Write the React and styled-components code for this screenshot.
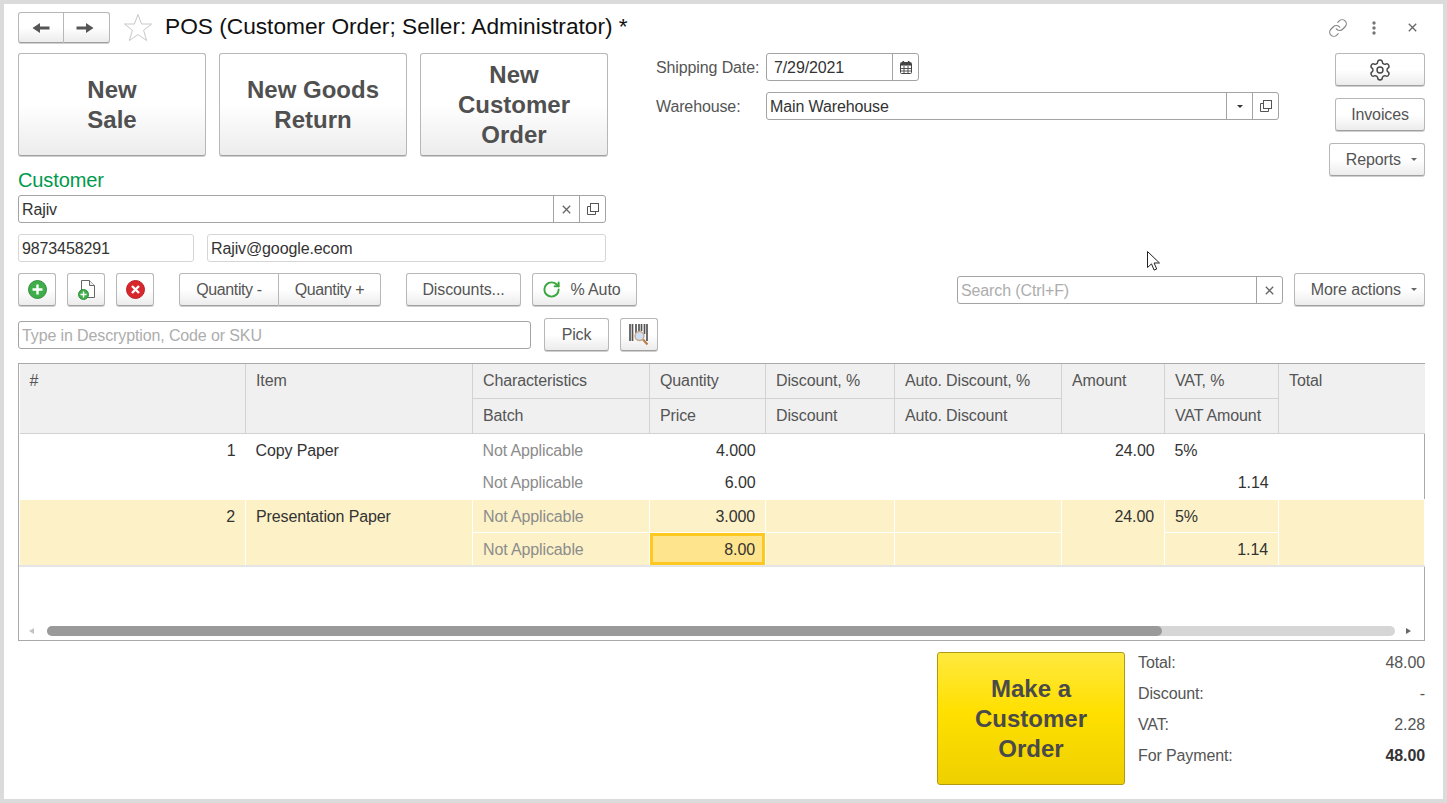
import React from 'react';
import styled, {createGlobalStyle, css} from 'styled-components';
import {Link, Settings, RotateCw} from 'lucide-react';

const GlobalStyle = createGlobalStyle`
  html, body {
    margin: 0;
    background: #dbdbdb;
  }
  body {
    font-family: "Liberation Sans", Arial, sans-serif;
    font-size: 16px;
    letter-spacing: -0.12px;
    color: #4b4b4b;
  }
  * { box-sizing: border-box; }
`;

const Panel = styled.div`
  position: relative;
  width: 1439px;
  height: 795px;
  margin: 4px;
  padding: 8px 18px 0 14px;
  background: #fff;
`;

const Header = styled.div`
  display: flex;
  align-items: center;
  height: 31px;
  margin-bottom: 10px;
`;

const NavGroup = styled.div`
  display: flex;
  width: 92px;
  height: 31px;
`;

const buttonLook = css`
  background: linear-gradient(#fff 50%, #ececec);
  border: 1px solid #b7b7b7;
  border-bottom-color: #a0a0a0;
  border-radius: 3px;
  box-shadow: 0 1px 0 #cfcfcf;
`;

const NavButton = styled.div`
  ${buttonLook}
  flex: 0 0 46px;
  display: flex;
  align-items: center;
  justify-content: center;
  padding-right: ${p => (p.$right ? 3 : 0)}px;
  border-radius: ${p => (p.$right ? '0 3px 3px 0' : '3px 0 0 3px')};
  border-left-width: ${p => (p.$right ? 0 : 1)}px;
`;

const StarWrap = styled.div`
  display: flex;
  margin-left: 13px;
`;

const Title = styled.h1`
  margin: 0 0 2px 12px;
  font-size: 22.7px;
  font-weight: normal;
  letter-spacing: 0;
  color: #111;
  white-space: nowrap;
`;

const HeaderTools = styled.div`
  display: flex;
  align-items: center;
  margin-left: auto;
  padding-right: 8px;
  color: #858585;
`;

const KebabSlot = styled.div`
  display: flex;
  margin: 0 32px 0 24px;
`;

const TopArea = styled.div`
  display: flex;
`;

const LeftColumn = styled.div`
  width: 590px;
  flex: none;
`;

const BigRow = styled.div`
  display: flex;
  gap: 13px;
`;

const BigButton = styled.div`
  ${buttonLook}
  display: flex;
  align-items: center;
  justify-content: center;
  width: 188px;
  height: 103px;
  font-size: 24px;
  font-weight: bold;
  line-height: 30px;
  letter-spacing: 0;
  text-align: center;
  color: #505050;
`;

const GreenLabel = styled.div`
  margin-top: 14px;
  height: 25px;
  font-size: 20px;
  line-height: 21px;
  color: #00994d;
`;

const Field = styled.div`
  display: flex;
  align-items: stretch;
  width: ${p => p.$w}px;
  height: 28px;
  background: #fff;
  border: 1px solid ${p => (p.$soft ? '#d6d6d6' : '#a3a3a3')};
  border-radius: 3px;
`;

const FieldText = styled.div`
  flex: 1;
  padding-left: ${p => p.$pad || 3}px;
  line-height: 28px;
  white-space: nowrap;
  color: ${p => (p.$hint ? '#adadad' : '#333')};
`;

const FieldButton = styled.div`
  display: flex;
  align-items: center;
  justify-content: center;
  flex: none;
  width: ${p => p.$w || 26}px;
  border-left: 1px solid #a3a3a3;
`;

const ContactRow = styled.div`
  display: flex;
  gap: 13px;
  margin-top: 11px;
`;

const MiddleColumn = styled.div`
  width: 623px;
  margin-left: 48px;
  flex: none;
`;

const FormRow = styled.div`
  display: flex;
  align-items: center;
  margin-bottom: 11px;
`;

const FormLabel = styled.div`
  width: 110px;
  padding-top: 2px;
  color: #555;
  white-space: nowrap;
`;

const RightColumn = styled.div`
  display: flex;
  flex-direction: column;
  align-items: flex-end;
  gap: 12px;
  margin-left: auto;
`;

const Button = styled.div`
  ${buttonLook}
  display: flex;
  align-items: center;
  justify-content: ${p => (p.$menu ? 'flex-end' : 'center')};
  gap: ${p => p.$gap || 0}px;
  flex: none;
  width: ${p => p.$w}px;
  height: 33px;
  padding-right: ${p => p.$endPad || 0}px;
  color: #555;
  white-space: nowrap;
`;

const GroupButton = styled(Button)`
  letter-spacing: -0.4px;
  border-radius: ${p => (p.$right ? '0 3px 3px 0' : '3px 0 0 3px')};
  border-left-width: ${p => (p.$right ? 0 : 1)}px;
`;

const Caret = styled.span`
  display: inline-block;
  width: 0;
  height: 0;
  margin-left: ${p => p.$gap ?? 10}px;
  border: 3px solid transparent;
  border-top: 3px solid ${p => p.$color || '#666'};
  border-bottom: 0;
`;

const Toolbar = styled.div`
  display: flex;
  align-items: center;
  margin-top: 11px;
  height: 33px;
`;

const ToolGroup = styled.div`
  display: flex;
  margin-left: ${p => p.$left || 0}px;
`;

const SearchBox = styled.div`
  display: flex;
  margin-left: auto;
  margin-right: 11px;
  padding-top: 1px;
`;

const QuickRow = styled.div`
  display: flex;
  align-items: center;
  gap: 13px;
  margin: 12px 0 12px;
  height: 33px;
`;

const QuickTail = styled.div`
  margin-left: -2px;
`;

const TableFrame = styled.div`
  display: flex;
  flex-direction: column;
  width: 1407px;
  height: 278px;
  border: 1px solid #a9a9a9;
`;

const Grid = styled.table`
  width: 1405px;
  table-layout: fixed;
  border-collapse: collapse;
`;

const Head = styled.th`
  height: ${p => (p.$low ? 35 : 34)}px;
  padding: 0 0 0 10px;
  font-weight: normal;
  text-align: left;
  vertical-align: top;
  line-height: 33px;
  color: #555;
  background: #f0f0f0;
  border: 1px solid #d2d2d2;
  border-top: 0;
  &:first-child { border-left: 0; }
  &:last-child { border-right: 0; }
`;

const Cell = styled.td`
  height: 33px;
  padding: 2px 10px 0;
  text-align: ${p => (p.$num ? 'right' : 'left')};
  vertical-align: top;
  line-height: 30px;
  color: ${p => (p.$muted ? '#8c8c8c' : '#333')};
  ${p => p.$picked && css`
    height: 32px;
    background: #fdf2c7;
    border: 1px solid #fff;
  `}
  ${p => p.$active && css`
    background: #fee48c;
    box-shadow: inset 0 0 0 3px #fdc921;
  `}
`;

const PickedRow = styled.tr`
  border-top: ${p => (p.$first ? '1px solid #e5e5e5' : '0')};
  border-bottom: ${p => (p.$last ? '2px solid #e5e5e5' : '0')};
`;

const ScrollBar = styled.div`
  display: flex;
  align-items: center;
  margin-top: auto;
  height: 10px;
  margin-bottom: 4px;
  padding: 0 13px 0 10px;
`;

const ScrollArrow = styled.span`
  width: 0;
  height: 0;
  border: 3px solid transparent;
  ${p => (p.$right
    ? css`border-left: 5px solid #666; border-right: 0; margin-left: 11px;`
    : css`border-right: 5px solid #c4c4c4; border-left: 0; margin-right: 13px;`)}
`;

const ScrollTrack = styled.div`
  flex: 1;
  height: 10px;
  background: #d6d6d6;
  border-radius: 5px;
`;

const ScrollThumb = styled.div`
  width: 1115px;
  height: 10px;
  background: #9a9a9a;
  border-radius: 5px;
`;

const Footer = styled.div`
  display: flex;
  justify-content: flex-end;
  margin-top: 11px;
`;

const MakeOrder = styled.div`
  display: flex;
  align-items: center;
  justify-content: center;
  width: 188px;
  height: 133px;
  font-size: 24px;
  font-weight: bold;
  line-height: 30px;
  letter-spacing: 0;
  text-align: center;
  color: #4a4a4a;
  background: linear-gradient(#ffe93f, #ffe000 45%, #eed000);
  border: 1px solid #b09a10;
  border-radius: 3px;
`;

const Totals = styled.div`
  width: 287px;
  margin: -5px 0 0 13px;
`;

const TotalRow = styled.div`
  display: flex;
  justify-content: space-between;
  height: 31px;
  line-height: 31px;
  color: #555;
`;

const TotalValue = styled.span`
  font-weight: ${p => (p.$bold ? 'bold' : 'normal')};
  color: ${p => (p.$bold ? '#333' : '#555')};
`;

const Pointer = styled.svg`
  position: absolute;
  left: 1143px;
  top: 247px;
`;

const Arrow = ({flip}) => (
  <svg width="18" height="12" viewBox="0 0 18 12" style={flip ? {transform: 'scaleX(-1)'} : undefined}>
    <path d="M0.5 6 8 1V4.4h9.5v3.2H8V11z" fill="#555" />
  </svg>
);

const Star = () => (
  <svg width="30" height="29" viewBox="0 0 30 29">
    <path d="M15 1.5 18.6 11H28.6L20.6 17.3 23.6 27.5 15 21.6 6.4 27.5 9.4 17.3 1.4 11H11.4z" fill="#fff" stroke="#c8c8c8" />
  </svg>
);

const Kebab = () => (
  <svg width="4" height="14" viewBox="0 0 4 14">
    <circle cx="2" cy="2" r="1.7" fill="#777" />
    <circle cx="2" cy="7" r="1.7" fill="#777" />
    <circle cx="2" cy="12" r="1.7" fill="#777" />
  </svg>
);

const Cross = ({size = 9, color = '#666'}) => (
  <svg width={size} height={size} viewBox="0 0 9 9">
    <path d="M.8.8l7.4 7.4M8.2.8.8 8.2" stroke={color} strokeWidth="1.3" fill="none" />
  </svg>
);

const OpenIcon = () => (
  <svg width="12" height="12" viewBox="0 0 12 12" fill="none" stroke="#555">
    <path d="M3.5 3.5h-3v8h8v-3" />
    <rect x="3.5" y=".5" width="8" height="8" />
  </svg>
);

const Calendar = () => (
  <svg width="12" height="13" viewBox="0 0 12 13">
    <path d="M2.5 0h1.6v2H2.5zM7.9 0h1.6v2H7.9z" fill="#444" />
    <rect x=".5" y="1.5" width="11" height="11" rx="1" fill="#fff" stroke="#444" />
    <rect x="1" y="2" width="10" height="2.6" fill="#444" />
    <path d="M4 5v7M8 5v7M1 7.5h10M1 10h10" stroke="#444" strokeWidth=".9" />
  </svg>
);

const AddIcon = () => (
  <svg width="19" height="19" viewBox="0 0 19 19">
    <circle cx="9.5" cy="9.5" r="9" fill="#3fae4a" stroke="#2f8f3a" />
    <path d="M9.5 4.5v10M4.5 9.5h10" stroke="#fff" strokeWidth="2.4" />
  </svg>
);

const AddDocIcon = () => (
  <svg width="17" height="20" viewBox="0 0 17 20">
    <path d="M3.5.5h8l5 5v12h-13z" fill="#fff" stroke="#666" />
    <path d="M11.5.5v5h5" fill="#eee" stroke="#666" />
    <circle cx="5.5" cy="14.5" r="5" fill="#3fae4a" stroke="#2f8f3a" />
    <path d="M5.5 11.5v6M2.5 14.5h6" stroke="#fff" strokeWidth="1.4" />
  </svg>
);

const RemoveIcon = () => (
  <svg width="19" height="19" viewBox="0 0 19 19">
    <circle cx="9.5" cy="9.5" r="9" fill="#d8262c" stroke="#b91f24" />
    <path d="M6 6l7 7M13 6l-7 7" stroke="#fff" strokeWidth="2.4" />
  </svg>
);

const BarcodeIcon = () => (
  <svg width="20" height="22" viewBox="0 0 20 22">
    <path d="M1 0v17M3.5 0v17M7 0v10M10 0v7M12.5 0v7M15.5 0v10M18 0v17" stroke="#555" strokeWidth="1.7" />
    <circle cx="10.5" cy="12" r="4.5" fill="#cfe0f5" stroke="#c9a98a" strokeWidth="1.4" />
    <path d="M14 15.5l4.5 5" stroke="#b9804f" strokeWidth="2.2" />
  </svg>
);

const columns = [226, 227, 177, 116, 129, 167, 103, 114, 146];

const App = () => (
  <>
    <GlobalStyle />
    <Panel>
      <Header>
        <NavGroup>
          <NavButton><Arrow /></NavButton>
          <NavButton $right><Arrow flip /></NavButton>
        </NavGroup>
        <StarWrap><Star /></StarWrap>
        <Title>POS (Customer Order; Seller: Administrator) *</Title>
        <HeaderTools>
          <Link size={20} strokeWidth={1.4} />
          <KebabSlot><Kebab /></KebabSlot>
          <Cross />
        </HeaderTools>
      </Header>

      <TopArea>
        <LeftColumn>
          <BigRow>
            <BigButton>New<br />Sale</BigButton>
            <BigButton>New Goods<br />Return</BigButton>
            <BigButton>New<br />Customer<br />Order</BigButton>
          </BigRow>
          <GreenLabel>Customer</GreenLabel>
          <Field $w={588}>
            <FieldText>Rajiv</FieldText>
            <FieldButton><Cross /></FieldButton>
            <FieldButton><OpenIcon /></FieldButton>
          </Field>
          <ContactRow>
            <Field $w={176} $soft><FieldText>9873458291</FieldText></Field>
            <Field $w={399} $soft><FieldText>Rajiv@google.ecom</FieldText></Field>
          </ContactRow>
        </LeftColumn>

        <MiddleColumn>
          <FormRow>
            <FormLabel>Shipping Date:</FormLabel>
            <Field $w={153}>
              <FieldText $pad={7}>7/29/2021</FieldText>
              <FieldButton><Calendar /></FieldButton>
            </Field>
          </FormRow>
          <FormRow>
            <FormLabel>Warehouse:</FormLabel>
            <Field $w={513}>
              <FieldText>Main Warehouse</FieldText>
              <FieldButton><Caret $gap={0} $color="#333" /></FieldButton>
              <FieldButton><OpenIcon /></FieldButton>
            </Field>
          </FormRow>
        </MiddleColumn>

        <RightColumn>
          <Button $w={90}><Settings size={24} strokeWidth={1.4} color="#444" /></Button>
          <Button $w={90}>Invoices</Button>
          <Button $w={96} $menu $endPad={7}>Reports<Caret /></Button>
        </RightColumn>
      </TopArea>

      <Toolbar>
        <Button $w={38}><AddIcon /></Button>
        <ToolGroup $left={11}><Button $w={38}><AddDocIcon /></Button></ToolGroup>
        <ToolGroup $left={11}><Button $w={38}><RemoveIcon /></Button></ToolGroup>
        <ToolGroup $left={25}>
          <GroupButton $w={100}>Quantity -</GroupButton>
          <GroupButton $w={102} $right>Quantity +</GroupButton>
        </ToolGroup>
        <ToolGroup $left={25}><Button $w={115}>Discounts...</Button></ToolGroup>
        <ToolGroup $left={11}>
          <Button $w={105} $gap={10} $endPad={7}>
            <RotateCw size={19} strokeWidth={2.5} color="#3aa83f" />
            % Auto
          </Button>
        </ToolGroup>
        <SearchBox>
          <Field $w={326}>
            <FieldText $hint>Search (Ctrl+F)</FieldText>
            <FieldButton><Cross /></FieldButton>
          </Field>
        </SearchBox>
        <Button $w={131} $menu $endPad={7}>More actions<Caret /></Button>
      </Toolbar>

      <QuickRow>
        <Field $w={513}><FieldText $hint>Type in Descryption, Code or SKU</FieldText></Field>
        <Button $w={65}>Pick</Button>
        <QuickTail><Button $w={38}><BarcodeIcon /></Button></QuickTail>
      </QuickRow>

      <TableFrame>
        <Grid>
          <colgroup>
            {columns.map((w, i) => <col key={i} style={{width: w}} />)}
          </colgroup>
          <thead>
            <tr>
              <Head rowSpan={2}>#</Head>
              <Head rowSpan={2}>Item</Head>
              <Head>Characteristics</Head>
              <Head>Quantity</Head>
              <Head>Discount, %</Head>
              <Head>Auto. Discount, %</Head>
              <Head rowSpan={2}>Amount</Head>
              <Head>VAT, %</Head>
              <Head rowSpan={2}>Total</Head>
            </tr>
            <tr>
              <Head $low>Batch</Head>
              <Head $low>Price</Head>
              <Head $low>Discount</Head>
              <Head $low>Auto. Discount</Head>
              <Head $low>VAT Amount</Head>
            </tr>
          </thead>
          <tbody>
            <tr>
              <Cell rowSpan={2} $num>1</Cell>
              <Cell rowSpan={2}>Copy Paper</Cell>
              <Cell $muted>Not Applicable</Cell>
              <Cell $num>4.000</Cell>
              <Cell />
              <Cell />
              <Cell rowSpan={2} $num>24.00</Cell>
              <Cell>5%</Cell>
              <Cell rowSpan={2} />
            </tr>
            <tr>
              <Cell $muted>Not Applicable</Cell>
              <Cell $num>6.00</Cell>
              <Cell />
              <Cell />
              <Cell $num>1.14</Cell>
            </tr>
            <PickedRow $first>
              <Cell rowSpan={2} $num $picked>2</Cell>
              <Cell rowSpan={2} $picked>Presentation Paper</Cell>
              <Cell $muted $picked>Not Applicable</Cell>
              <Cell $num $picked>3.000</Cell>
              <Cell $picked />
              <Cell $picked />
              <Cell rowSpan={2} $num $picked>24.00</Cell>
              <Cell $picked>5%</Cell>
              <Cell rowSpan={2} $picked />
            </PickedRow>
            <PickedRow $last>
              <Cell $muted $picked>Not Applicable</Cell>
              <Cell $num $picked $active>8.00</Cell>
              <Cell $picked />
              <Cell $picked />
              <Cell $num $picked>1.14</Cell>
            </PickedRow>
          </tbody>
        </Grid>
        <ScrollBar>
          <ScrollArrow />
          <ScrollTrack><ScrollThumb /></ScrollTrack>
          <ScrollArrow $right />
        </ScrollBar>
      </TableFrame>

      <Footer>
        <MakeOrder>Make a<br />Customer<br />Order</MakeOrder>
        <Totals>
          <TotalRow><span>Total:</span><TotalValue>48.00</TotalValue></TotalRow>
          <TotalRow><span>Discount:</span><TotalValue>-</TotalValue></TotalRow>
          <TotalRow><span>VAT:</span><TotalValue>2.28</TotalValue></TotalRow>
          <TotalRow><span>For Payment:</span><TotalValue $bold>48.00</TotalValue></TotalRow>
        </Totals>
      </Footer>

      <Pointer width="14" height="20" viewBox="0 0 14 20">
        <path d="M.5.5v16l4-3.6 2.6 6.2 2.6-1.1-2.6-6h5.4z" fill="#fff" stroke="#222" />
      </Pointer>
    </Panel>
  </>
);

export default App;
